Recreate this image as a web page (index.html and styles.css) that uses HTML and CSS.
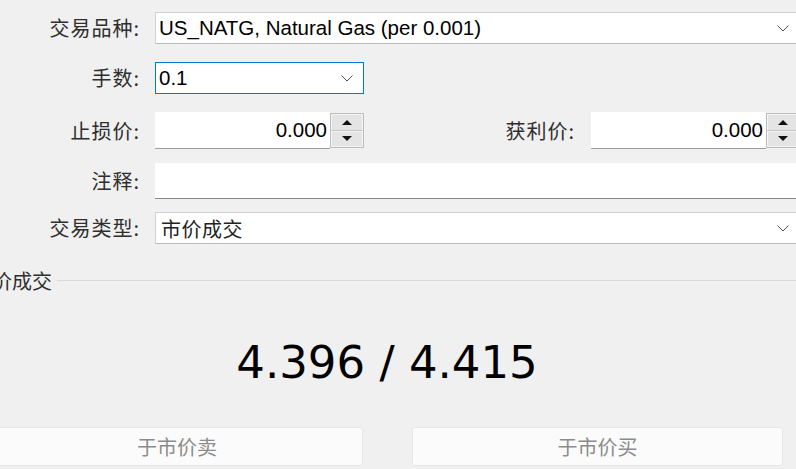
FILE: index.html
```html
<!DOCTYPE html>
<html lang="zh-CN">
<head>
<meta charset="utf-8">
<title>Order</title>
<link rel="stylesheet" href="styles.css">
</head>
<body>
<div class="page">
  <div class="row r1">
    <div class="lbl">交易品种:</div>
    <div class="combo wide">
      <span class="val">US_NATG, Natural Gas (per 0.001)</span>
      <svg class="chev" width="12" height="7" viewBox="0 0 12 7"><polyline points="0.5,0.5 6,6 11.5,0.5" fill="none" stroke="#505050" stroke-width="1"/></svg>
    </div>
  </div>
  <div class="row r2">
    <div class="lbl">手数:</div>
    <div class="combo short focus">
      <span class="val">0.1</span>
      <svg class="chev" width="12" height="7" viewBox="0 0 12 7"><polyline points="0.5,0.5 6,6 11.5,0.5" fill="none" stroke="#505050" stroke-width="1"/></svg>
    </div>
  </div>
  <div class="row r3">
    <div class="lbl">止损价:</div>
    <div class="spin">
      <div class="spin-field">0.000</div>
      <div class="spin-btns">
        <div class="sb up"><svg width="10" height="5" viewBox="0 0 10 5"><polygon points="5,0 10,5 0,5" fill="#111"/></svg></div>
        <div class="sb down"><svg width="10" height="5" viewBox="0 0 10 5"><polygon points="0,0 10,0 5,5" fill="#111"/></svg></div>
      </div>
    </div>
    <div class="lbl2">获利价:</div>
    <div class="spin">
      <div class="spin-field">0.000</div>
      <div class="spin-btns">
        <div class="sb up"><svg width="10" height="5" viewBox="0 0 10 5"><polygon points="5,0 10,5 0,5" fill="#111"/></svg></div>
        <div class="sb down"><svg width="10" height="5" viewBox="0 0 10 5"><polygon points="0,0 10,0 5,5" fill="#111"/></svg></div>
      </div>
    </div>
  </div>
  <div class="row r4">
    <div class="lbl">注释:</div>
    <div class="input"></div>
  </div>
  <div class="row r5">
    <div class="lbl">交易类型:</div>
    <div class="combo wide">
      <span class="val">市价成交</span>
      <svg class="chev" width="12" height="7" viewBox="0 0 12 7"><polyline points="0.5,0.5 6,6 11.5,0.5" fill="none" stroke="#505050" stroke-width="1"/></svg>
    </div>
  </div>
  <div class="grp">
    <div class="grp-title"><span class="gt">市价成交</span><span class="gline"></span></div>
    <div class="price">4.396 / 4.415</div>
    <div class="btns">
      <div class="btn sell">于市价卖</div>
      <div class="btn buy">于市价买</div>
    </div>
  </div>
</div>
</body>
</html>
```
FILE: styles.css
```css
html, body {
  margin: 0;
  padding: 0;
}
body {
  background: #f0f0f0;
  width: 796px;
  height: 469px;
  overflow: hidden;
  font-family: "Liberation Sans", "Noto Sans CJK SC", sans-serif;
  color: #000;
}
.page {
  width: 800px;
  padding-top: 12px;
}
.row {
  display: flex;
  align-items: center;
}
.r2 { margin-top: 18px; }
.r3 { margin-top: 18px; }
.r4 { margin-top: 14px; }
.r5 { margin-top: 13px; }

.lbl, .lbl2 {
  font-family: "Noto Sans CJK SC", sans-serif;
  font-size: 20px;
  color: #2e2e2e;
  text-align: right;
  flex: none;
  line-height: 24px;
  letter-spacing: 1px;
}
.lbl {
  width: 140px;
  margin-right: 15px;
}
.lbl2 {
  flex: 1;
  margin-right: 16px;
}
.combo {
  box-sizing: border-box;
  height: 32px;
  background: #fff;
  border: 1px solid #d2d2d2;
  border-bottom-color: #bcbcbc;
  display: flex;
  align-items: center;
  padding-left: 3px;
  font-size: 20.5px;
}
.combo.wide { flex: 1; }
.combo.short { width: 209px; }
.combo.focus { border: 1px solid #0078d7; }
.combo .val {
  flex: 1;
  white-space: nowrap;
}
.r5 .combo .val {
  font-family: "Noto Sans CJK SC", sans-serif;
  font-size: 20px;
  padding-left: 2px;
  letter-spacing: 0.5px;
  color: #222;
}
.chev {
  flex: none;
  margin-right: 10px;
  margin-top: 1px;
}
.spin {
  display: flex;
  width: 209px;
  height: 37px;
  flex: none;
}
.spin-field {
  flex: 1;
  box-sizing: border-box;
  background: #fff;
  border-bottom: 1px solid #9c9c9c;
  display: flex;
  align-items: center;
  justify-content: flex-end;
  padding-right: 3px;
  font-size: 20.5px;
}
.spin-btns {
  width: 34px;
  box-sizing: border-box;
  height: 35px;
  margin-top: 1px;
  border: 1px solid #bdbdbd;
  display: flex;
  flex-direction: column;
  background: #e4e4e4;
}
.sb {
  flex: 1;
  display: flex;
  align-items: center;
  justify-content: center;
  border: 1px solid #f4f4f4;
}
.sb.up { border-bottom-color: #c4c4c4; }
.input {
  flex: 1;
  height: 36px;
  box-sizing: border-box;
  background: #fff;
  border-bottom: 1px solid #8a8a8a;
}
.grp {
  margin-left: -9px;
  width: 792px;
  margin-top: 26px;
}
.grp-title {
  display: flex;
  align-items: center;
  height: 22px;
  margin-right: -30px;
}
.gt {
  font-family: "Noto Sans CJK SC", sans-serif;
  font-size: 20px;
  color: #2e2e2e;
  margin-left: -19px;
  line-height: 22px;
  white-space: nowrap;
}
.gline {
  flex: 1;
  height: 1px;
  background: #d9d9d9;
  margin-left: 5px;
  margin-top: -2px;
}
.price {
  margin-top: 48px;
  height: 46px;
  line-height: 46px;
  text-align: center;
  font-family: "DejaVu Sans", sans-serif;
  font-size: 45px;
  color: #000;
}
.btns {
  display: flex;
  gap: 49px;
  margin-top: 41px;
}
.btn {
  height: 39px;
  box-sizing: border-box;
  background: #fbfbfb;
  border: 1px solid #e6e6e6;
  border-radius: 3px;
  display: flex;
  align-items: center;
  justify-content: center;
  font-family: "Noto Sans CJK SC", sans-serif;
  font-size: 20px;
  color: #8c8c8c;
}
.sell { width: 372px; }
.buy { width: 371px; }
```
